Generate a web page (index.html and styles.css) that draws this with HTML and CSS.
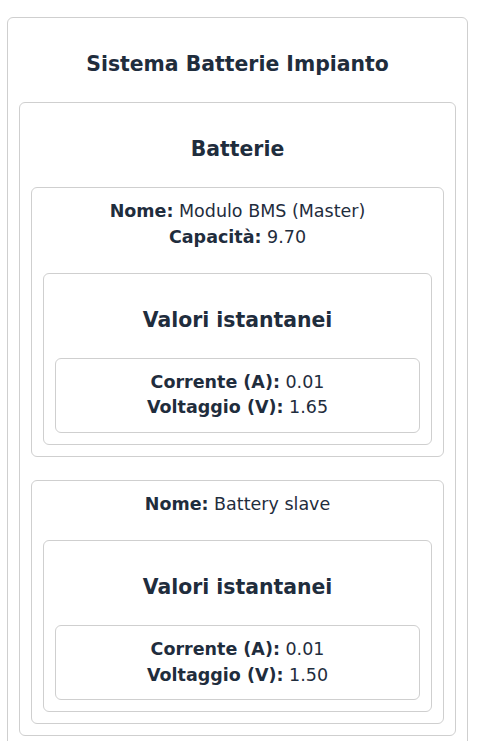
FILE: index.html
```html
<!DOCTYPE html>
<html lang="it">
<head>
<meta charset="utf-8">
<title>Sistema Batterie Impianto</title>
<link rel="stylesheet" href="styles.css">
</head>
<body>
<div class="page">
  <section class="card">
    <h2 class="card-title">Sistema Batterie Impianto</h2>
    <section class="card">
      <h3 class="card-title">Batterie</h3>
      <div class="battery card">
        <div class="info">
          <div><b>Nome:</b> Modulo BMS (Master)</div>
          <div><b>Capacità:</b> 9.70</div>
        </div>
        <section class="card values">
          <h4 class="card-title">Valori istantanei</h4>
          <div class="card info">
            <div><b>Corrente (A):</b> 0.01</div>
            <div><b>Voltaggio (V):</b> 1.65</div>
          </div>
        </section>
      </div>
      <div class="battery card">
        <div class="info">
          <div><b>Nome:</b> Battery slave</div>
        </div>
        <section class="card values">
          <h4 class="card-title">Valori istantanei</h4>
          <div class="card info">
            <div><b>Corrente (A):</b> 0.01</div>
            <div><b>Voltaggio (V):</b> 1.50</div>
          </div>
        </section>
      </div>
    </section>
  </section>
</div>
</body>
</html>
```
FILE: styles.css
```css
html, body {
  margin: 0;
  padding: 0;
  background: #ffffff;
}
body {
  font-family: "DejaVu Sans", Verdana, sans-serif;
  font-size: 17.5px;
  line-height: 25.5px;
  color: #1f2d3d;
}
.page {
  padding: 17px 10px 0 7px;
}
.card {
  border: 1px solid #cfcfcf;
  border-radius: 6px;
  padding: 11px;
  text-align: center;
  background: #ffffff;
}
.card-title {
  font-size: 20.4px;
  line-height: 24px;
  font-weight: bold;
  margin: 23px 0 26px;
}
.battery + .battery {
  margin-top: 23.5px;
}
.values {
  margin-top: 22.5px;
}
.info b {
  font-weight: bold;
}
```
